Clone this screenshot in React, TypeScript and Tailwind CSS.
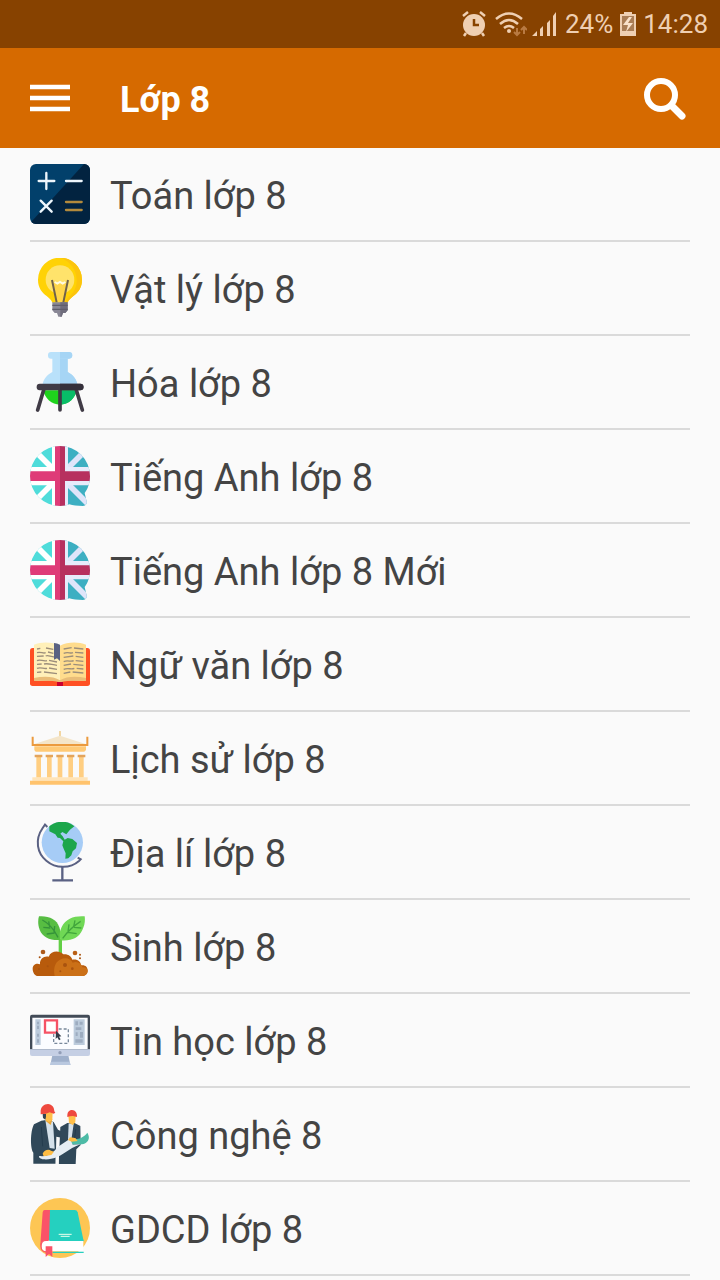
import React from "react";

interface Subject {
  id: string;
  name: string;
  icon: React.ReactNode;
}

const SubjectIcon = ({ children }: { children: React.ReactNode }) => (
  <svg viewBox="30 30 180 180" className="w-[60px] h-[60px] shrink-0" aria-hidden="true">
    {children}
  </svg>
);

const MathIcon = () => (
  <SubjectIcon>
    <rect x="30" y="30" width="180" height="180" rx="18" fill="#02406b" />
    <path d="M192 30a18 18 0 0 1 18 18v144a18 18 0 0 1-18 18H48a18 18 0 0 1-14-7z" fill="#022340" />
    <g strokeWidth="7" strokeLinecap="round" fill="none">
      <path d="M56 81h47M79 57v48M138 81h47M62 140l33 33M95 140l-33 33" stroke="#eef6fc" />
      <path d="M138 144h47M138 168h47" stroke="#b38a3c" />
    </g>
  </SubjectIcon>
);

const BulbIcon = () => (
  <SubjectIcon>
    <path d="M120 29a66 66 0 0 0-66 66c0 25 12 38 26 49 12 10 16 15 17 20h46c1-5 5-10 17-20 14-11 26-24 26-49a66 66 0 0 0-66-66z" fill="#ffd205" />
    <path d="M120 29a66 66 0 0 1 66 66c0 25-12 38-26 49-12 10-16 15-17 20h-9c4-18 36-25 36-66 0-35-22-60-50-69z" fill="#fcc40c" />
    <circle cx="120" cy="95" r="43" fill="#ffe36b" />
    <path d="M101 104h38l-8 59h-22z" fill="#ffd64a" />
    <path d="M104 102l8 5 8-5 8 5 8-5" fill="none" stroke="#fffbe2" strokeWidth="6" />
    <path d="M96 96l14 67M144 96l-14 67" fill="none" stroke="#70624a" strokeWidth="6" />
    <path d="M97 163h46v24l-7 8h-7l-4 11h-10l-4-11h-7l-7-8z" fill="#898795" />
    <path d="M121 163h22v24l-7 8h-7l-4 11h-4z" fill="#6f6d7c" />
    <path d="M97 172h46M97 184h46" stroke="#605d6b" strokeWidth="4" />
  </SubjectIcon>
);

const FlaskIcon = () => (
  <SubjectIcon>
    <path d="M97 46h46v44c17 9 28 22 30 43H67c2-21 13-34 30-43z" fill="#b9e1fa" />
    <path d="M120 46h23v44c17 9 28 22 30 43h-53z" fill="#a6d5f5" />
    <rect x="84" y="30" width="72" height="20" rx="9" fill="#b9e1fa" />
    <path d="M120 30h27a10 10 0 0 1 0 20h-27z" fill="#a6d5f5" />
    <path d="M70 145h100c-4 24-25 43-50 43s-46-19-50-43z" fill="#1fd31d" />
    <path d="M120 145h50c-4 24-25 43-50 43z" fill="#08bd68" />
    <path d="M71 144L53 204M169 144l18 60M120 144v60" stroke="#403b46" strokeWidth="11" strokeLinecap="round" />
    <rect x="50" y="125" width="140" height="20" rx="9" fill="#403b46" />
    <path d="M120 125h61a9 9 0 0 1 0 20h-61z" fill="#35303b" />
  </SubjectIcon>
);

const FlagIcon = ({ id }: { id: string }) => (
  <SubjectIcon>
    <clipPath id={id}>
      <path d="M120 30a90 90 0 0 0 0 180c10 0 19-2 28-5 10 3 24 5 41 5 9 0 14-9 10-17l-5-22c10-12 16-33 16-51a90 90 0 0 0-90-90z" />
    </clipPath>
    <g clipPath={`url(#${id})`}>
      <path d="M30 30h90v180H30z" fill="#4fdcda" />
      <path d="M120 30h90v180h-90z" fill="#3dafc2" />
      <path d="M40 40l80 80L40 200" fill="none" stroke="#fff" strokeWidth="17" />
      <path d="M204 36l-84 84 84 84" fill="none" stroke="#dfe5fa" strokeWidth="17" />
      <path d="M30 93h66V30h24v180H96v-62H30z" fill="#fff" />
      <path d="M210 93h-66V30h-24v180h24v-62h66z" fill="#e7ebfb" />
      <path d="M30 106h75V30h15v180h-15v-75H30z" fill="#df3b78" />
      <path d="M210 106h-75V30h-15v180h15v-75h75z" fill="#b7305f" />
    </g>
  </SubjectIcon>
);

const OpenBookIcon = () => (
  <SubjectIcon>
    <path d="M38 72h164q8 0 8 8v98q0 8-8 8H38q-8 0-8-8V80q0-8 8-8z" fill="#ff5023" />
    <path d="M111 174h18v12h-18z" fill="#c9002f" />
    <path d="M42 62c24-10 57-8 78 3v109c-18-6-50-4-78-3z" fill="#fff0b9" />
    <path d="M198 62c-24-10-57-8-78 3v109c18-6 50-4 78-3z" fill="#ffdc8d" />
    <path d="M42 162c28-6 58-6 78 7 20-13 50-13 78-7v9c-30-1-58-1-78 3-20-4-48-4-78-3z" fill="#e9bd78" />
    <g fill="none" stroke="#9c8e7b" strokeWidth="4">
      <path d="M51 75l10-2M78 72l22 4M51 86c12-4 18 4 26 0M84 84l16 4M51 97l20-1M77 96c9-4 14 4 34 4M51 110c10-6 18 4 30 0M87 109l24 5M51 121l14-1M72 120c12-3 22 2 39 4M51 133c12-5 20 3 30 0M87 132l24 4M51 145l13-1M72 144l39 5" />
      <path d="M131 75l24-4M162 72l28 3M131 88c14-6 20 2 28-2M165 85l25 2M131 100l29-4M167 97l23 3M131 113c14-6 20 2 30-3M167 110l23 2M131 124l22-4M160 121l30 3M131 136c14-6 22 2 32-3M170 133l20 2M131 148l20-4M158 144l32 3" />
    </g>
    <path d="M102 57q9 0 18 5v49l-9-8-9 4z" fill="#5a6282" />
  </SubjectIcon>
);

const TempleIcon = () => (
  <SubjectIcon>
    <path d="M120 39v16" stroke="#f1cf91" strokeWidth="5" />
    <path d="M41 79l79-26 79 26z" fill="#f4e5c9" />
    <path d="M38 56v25h164V56" fill="none" stroke="#eb9a3e" strokeWidth="6" />
    <path d="M43 85h155v11l-5 5H47l-4-5z" fill="#ffca77" />
    <path d="M49 115h14v64H49zM81 115h14v64H81zM113 115h14v64h-14zM145 115h14v64h-14zM177 115h14v64h-14z" fill="#ffce81" />
    <path d="M44 114h23M77 114h22M109 114h22M141 114h22M173 114h23" stroke="#e3a45c" strokeWidth="7" />
    <path d="M37 178h166v10H37z" fill="#ffe4b8" />
    <path d="M30 188h180v12H30z" fill="#ffc36d" />
  </SubjectIcon>
);

const GlobeIcon = () => (
  <SubjectIcon>
    <circle cx="127" cy="91" r="62" fill="#a6ccf6" />
    <path d="M88 43c22-18 54-19 75 0l-13 10-11 14-12-7-6 5 7 8 6 10 9-5 14 3 14 12-3 16-10 9-4 12-9 9-9 1 1-16-6-14-4-10 3-12-10-10-7-1-7-10-18-9z" fill="#1ca64b" />
    <path d="M82 45l-7-7-7 10c-25 36-16 76 11 98 28 24 71 25 98 1l5-5-9-5" fill="none" stroke="#5a6183" strokeWidth="6" />
    <path d="M127 162v42M97 205h62" fill="none" stroke="#5a6183" strokeWidth="7" />
  </SubjectIcon>
);

const PlantIcon = () => (
  <SubjectIcon>
    <path d="M121 98v48" stroke="#62cf45" strokeWidth="10" />
    <path d="M57 31c29-2 53 8 61 33 5 16 4 29 1 38-28 2-52-9-60-31-5-14-6-28-2-40z" fill="#57bd42" />
    <path d="M194 31c-31-2-56 6-69 32-7 15-8 27-3 40 31 3 54-7 65-31 7-14 9-28 7-41z" fill="#70d855" />
    <path d="M67 42c20 10 36 30 47 52M86 46l3 17M104 60l-2 19M70 64l21 2M80 84l24-3" fill="none" stroke="#35933a" strokeWidth="4" />
    <path d="M182 46c-21 13-39 30-54 51M165 43l-4 19M147 55l-3 22M184 66l-22-2M170 83l-27-4" fill="none" stroke="#41a53c" strokeWidth="4" />
    <path d="M38 188c0-12 12-18 22-13-1-17 12-26 26-23 7-18 31-20 44-7 12-2 24 5 27 16 15-3 26 6 26 17 13-2 20 5 20 16s-9 16-16 16H54c-9 0-16-10-16-22z" fill="#b85b0c" />
    <path d="M104 210c-4-21-1-40 16-49 16-8 32-4 38 9 15-5 26 2 29 14 9-1 16 4 16 10s-6 16-16 16z" fill="#cb7017" />
    <circle cx="69" cy="138" r="7" fill="#ad5a1b" />
    <circle cx="165" cy="141" r="7" fill="#b96016" />
    <g fill="#a9530f">
      <circle cx="59" cy="154" r="3" />
      <circle cx="180" cy="146" r="3" />
      <circle cx="180" cy="157" r="3" />
      <circle cx="135" cy="177" r="6" />
      <circle cx="157" cy="188" r="4" />
      <circle cx="121" cy="196" r="3" />
      <circle cx="83" cy="181" r="3" />
      <circle cx="57" cy="189" r="3" />
    </g>
  </SubjectIcon>
);

const ComputerIcon = () => (
  <SubjectIcon>
    <path d="M97 166h48l6 29H91z" fill="#9fb0cb" />
    <path d="M93 185h56l3 10H90z" fill="#b9c8df" />
    <path d="M36 44h168q6 0 6 6v99H30V50q0-6 6-6z" fill="#424b57" />
    <path d="M37 53h166v94H37z" fill="#fbfcff" />
    <path d="M30 148h180v14q0 6-6 6H36q-6 0-6-6z" fill="#c5cfe4" />
    <circle cx="120" cy="158" r="5" fill="#929eb7" />
    <path d="M46 58h16v77H46zM161 58h33v77h-33z" fill="#bccbdc" />
    <path d="M51 65h6v8h-6zM51 77h6v10h-6zM51 101h6v9h-6zM51 118h6v10h-6zM166 64h8v12h-8zM179 65h9v9h-9zM167 82h17v8h-17zM167 97h6v11h-6zM180 96h9v17h-9zM166 118h22v10h-22z" fill="#9dacc0" />
    <path d="M101 87h44v43h-44z" fill="none" stroke="#78889b" strokeWidth="4" strokeDasharray="9 6" />
    <path d="M75 61h36v37H75z" fill="#fff" stroke="#f55265" strokeWidth="7" />
    <path d="M108 92l16 17-7 1 5 8-5 3-5-9-5 5z" fill="#333c49" />
  </SubjectIcon>
);

const EngineersIcon = () => (
  <SubjectIcon>
    <path d="M42 91l22-11 19-3 18 7 13 23 20 10-4 15-21-4-2 81H40v-33c-9-10-10-63 2-85z" fill="#304859" />
    <path d="M76 78l23 5 5 81-15-2z" fill="#d5e1ea" />
    <path d="M79 72l18 4-5 17-15-12z" fill="#eca636" />
    <path d="M70 53h28l-1 25-10 6-10-5z" fill="#ffbf49" />
    <path d="M62 55c-1-16 10-25 22-25 12 1 19 10 19 22l3 4-5 3-12-4-11 4-9 1-7 1z" fill="#ee493e" />
    <path d="M68 60h10v8l-2 9-7-5z" fill="#344451" />
    <path d="M121 99l21-12 20-1 19 10 1 57-13 13-2 44h-51z" fill="#304859" />
    <path d="M146 88l15 2-8 55-9-8z" fill="#d5e1ea" />
    <path d="M145 64h22l-1 21-8 8-11-7z" fill="#ffbf49" />
    <path d="M142 69c-1-15 5-21 14-21 10 0 16 9 15 21l-12-3-9 1z" fill="#ee493e" />
    <path d="M107 180l9-6v36h-9z" fill="#fafafa" />
    <path d="M149 131c16 9 40 3 53-15 10 16 3 31-16 35l-32 1z" fill="#4dbba6" />
    <path d="M58 186c25 3 40-8 56-28l36-24 8 18 25-1c-41 11-61 49-113 45-8-1-16-6-12-10z" fill="#e6edf3" />
    <path d="M68 179c4-11 18-15 25-9l9 3-8 10-23 4zM150 130l16 2 7 9-18 2-11-5z" fill="#ffbd43" />
    <path d="M64 99l4 58M167 105l-3 26" stroke="#243c4e" strokeWidth="3" />
  </SubjectIcon>
);

const BookIcon = () => (
  <SubjectIcon>
    <circle cx="120" cy="120" r="90" fill="#fdc654" />
    <path d="M88 66h76q7 0 9 7l18 87H84z" fill="#25d0bf" />
    <path d="M74 66h16l-3 93H70q-8 4-7 17l-2-7 7-96q1-7 6-7z" fill="#fa5368" />
    <path d="M190 157H76c-15 0-17 29-1 33h115z" fill="#fff" />
    <path d="M86 157h-8c-20 0-20 35 0 35h4" fill="none" stroke="#fa5368" strokeWidth="4" />
    <path d="M88 157h103M98 193h93" stroke="#25d0bf" strokeWidth="4" />
    <path d="M116 139h39M122 145h27" stroke="#eaffed" strokeWidth="3" />
    <path d="M77 175h20v32l-10-9-10 9z" fill="#fa5368" />
  </SubjectIcon>
);

const subjects: Subject[] = [
  { id: "toan", name: "Toán lớp 8", icon: <MathIcon /> },
  { id: "vat-ly", name: "Vật lý lớp 8", icon: <BulbIcon /> },
  { id: "hoa", name: "Hóa lớp 8", icon: <FlaskIcon /> },
  { id: "tieng-anh", name: "Tiếng Anh lớp 8", icon: <FlagIcon id="flag-anh" /> },
  { id: "tieng-anh-moi", name: "Tiếng Anh lớp 8 Mới", icon: <FlagIcon id="flag-anh-moi" /> },
  { id: "ngu-van", name: "Ngữ văn lớp 8", icon: <OpenBookIcon /> },
  { id: "lich-su", name: "Lịch sử lớp 8", icon: <TempleIcon /> },
  { id: "dia-li", name: "Địa lí lớp 8", icon: <GlobeIcon /> },
  { id: "sinh", name: "Sinh lớp 8", icon: <PlantIcon /> },
  { id: "tin-hoc", name: "Tin học lớp 8", icon: <ComputerIcon /> },
  { id: "cong-nghe", name: "Công nghệ 8", icon: <EngineersIcon /> },
  { id: "gdcd", name: "GDCD lớp 8", icon: <BookIcon /> },
];

const StatusBar = () => (
  <div className="flex h-12 items-center justify-end bg-[#874200] pr-3 text-[26px] leading-none text-[#efcfb2]">
    <svg viewBox="0 0 26 26" className="mr-2 h-[26px] w-[26px]" aria-hidden="true">
      <circle cx="13" cy="14" r="11" fill="currentColor" />
      <path d="M2 5l5-4M24 5l-5-4M5 22l-2 3M21 22l2 3" stroke="currentColor" strokeWidth="2.5" />
      <path d="M13 8v6h5" fill="none" stroke="#874200" strokeWidth="2.5" />
    </svg>
    <svg viewBox="0 0 32 26" className="mr-1 h-[26px] w-8" aria-hidden="true">
      <path d="M1 8q13-11 26 0M5 13q9-8 18 0M9 17q5-4 10 0" fill="none" stroke="currentColor" strokeWidth="2.5" />
      <circle cx="14" cy="20" r="2" fill="currentColor" />
      <path d="M22 17v7M19 21l3 3 3-3M29 23v-7M26 19l3-3 3 3" fill="none" stroke="#b97a42" strokeWidth="2" />
    </svg>
    <svg viewBox="0 0 26 26" className="mr-2 h-[26px] w-[26px]" aria-hidden="true">
      <path d="M1 25l5-5v5zM9 18l3-3v10H9zM16 12l3-3v16h-3zM22 5l3-4v24h-3z" fill="currentColor" />
    </svg>
    <span>24%</span>
    <svg viewBox="0 0 16 24" className="mx-[7px] h-6 w-4" aria-hidden="true">
      <path d="M4 0h8v2h4v22H0V2h4z" fill="currentColor" />
      <path d="M2 4h12v15H2z" fill="#aa7d55" />
      <path d="M9 5l-6 8h5l-2 7 7-9H8l4-6z" fill="#fae2cb" />
    </svg>
    <span>14:28</span>
  </div>
);

const App = () => (
  <div className="min-h-screen bg-[#fafafa] font-['Roboto',sans-serif]">
    <StatusBar />

    <header className="flex h-[100px] items-center bg-[#d66a00] px-[30px] text-white">
      <button type="button" aria-label="Menu" className="mr-[50px]">
        <svg viewBox="0 0 40 44" className="h-11 w-10" aria-hidden="true">
          <path d="M0 11h40M0 22h40M0 33h40" stroke="currentColor" strokeWidth="4.5" />
        </svg>
      </button>
      <h1 className="flex-1 pt-1 text-4xl font-bold">Lớp 8</h1>
      <button type="button" aria-label="Tìm kiếm">
        <svg viewBox="0 0 48 48" className="h-12 w-12" fill="none" stroke="currentColor" aria-hidden="true">
          <circle cx="19" cy="21" r="14" strokeWidth="6" />
          <path d="M30 32l10 10" strokeWidth="7" strokeLinecap="round" />
        </svg>
      </button>
    </header>

    <main className="px-[30px]">
      <ul>
        {subjects.map((subject) => (
          <li key={subject.id} className="border-b-2 border-[#dadada]">
            <a href={`#${subject.id}`} className="flex items-center gap-5 py-4 text-[38px] leading-[56px] text-[#444]">
              {subject.icon}
              <span className="pt-1">{subject.name}</span>
            </a>
          </li>
        ))}
      </ul>
    </main>
  </div>
);

export default App;
